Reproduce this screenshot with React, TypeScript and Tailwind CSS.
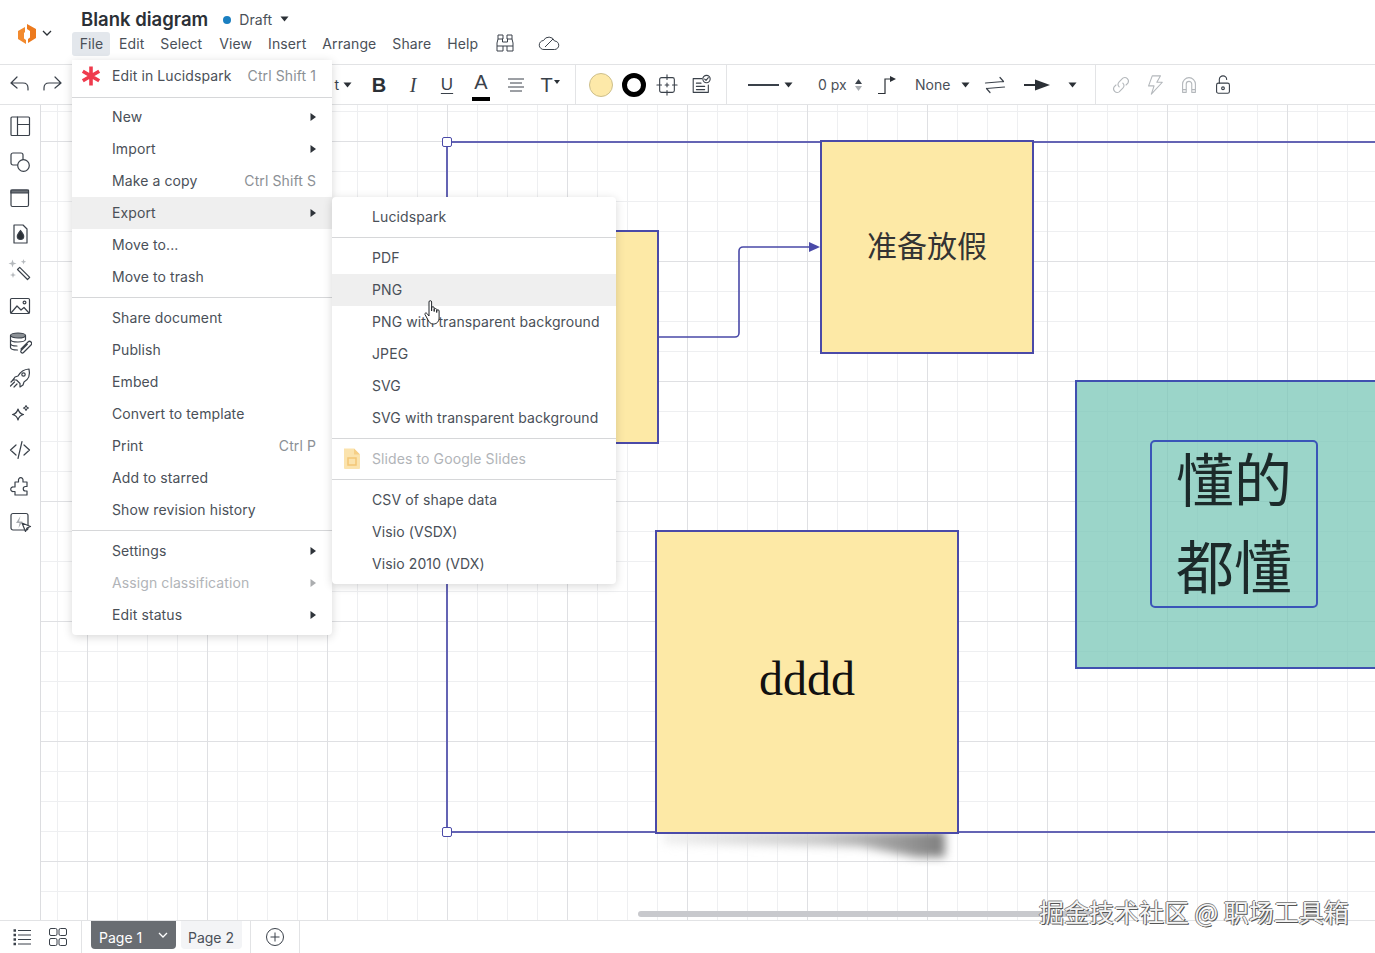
import React from 'react';

const ui = "font-['Inter','Noto_Sans',sans-serif]";

type IconProps = { className?: string; children: React.ReactNode; size?: number };

const Ico: React.FC<IconProps> = ({ className = 'text-[#3a414a]', children, size = 24 }) => (
    <svg
        width={size}
        height={size}
        viewBox="0 0 24 24"
        fill="none"
        stroke="currentColor"
        strokeWidth="1.2"
        strokeLinecap="round"
        strokeLinejoin="round"
        className={className}
    >
        {children}
    </svg>
);

const Caret: React.FC<{ className?: string }> = ({ className = '' }) => (
    <svg width="9" height="6" viewBox="0 0 9 6" className={className}>
        <path d="M0.5 0.5h8L4.5 5.5z" fill="#2b3036" />
    </svg>
);

const SubArrow = () => (
    <svg width="6" height="8" viewBox="0 0 6 8">
        <path d="M0.5 0v8L6 4z" fill="#2f343a" />
    </svg>
);

const railIcons: React.ReactNode[] = [
    <><rect x="3" y="3" width="18.5" height="18.5" rx="1" /><path d="M9.500 3v18.500M9.500 10.500h12" /></>,
    <><rect x="3" y="3" width="12" height="12" rx="2" /><circle cx="15.5" cy="15.5" r="5.8" fill="#fff" /></>,
    <><rect x="3" y="4" width="17.5" height="16.5" rx="1.5" /><path d="M3 4h17.5v3H3z" fill="#6c7278" /></>,
    <><path d="M6 3h9l4 4v14H6z" /><path d="M12.5 8.5c2 2.6 3.2 4 3.2 5.8a3.2 3.2 0 0 1-6.4 0c0-1.8 1.2-3.2 3.2-5.8z" fill="#2b3036" /></>,
    <><path d="M9.500 11.500l2.200-2.200 10 10-2.200 2.200z" /><path d="M4.500 1.500l1 3 3 1-3 1-1 3-1-3-3-1 3-1zM15.500 1l.7 2 2 .7-2 .7-.7 2-.7-2-2-.7 2-.7zM5 14l.8 2.200 2.200.8-2.200.8L5 20l-.8-2.200L2 17l2.200-.8z" fill="#b5b9bd" stroke="none" /></>,
    <><rect x="2.5" y="4.5" width="19" height="15" rx="1.2" /><path d="M3 19l6-7 4 4 3-2.5 5 5.5" /><circle cx="16.5" cy="8.5" r="1.4" /></>,
    <><ellipse cx="10" cy="5.5" rx="7.5" ry="2.5" fill="#8b9095" /><path d="M2.5 5.5v12c0 1.4 3 2.5 7 2.5M2.5 9.5c0 1.4 3.4 2.5 7.5 2.5s7.5-1.1 7.5-2.5v-4M2.5 13.5c0 1.4 3 2.5 6.5 2.5" /><path d="M13 19l7-7a2 2 0 0 1 3 3l-7.5 7.5a1.5 1.5 0 0 1-2.2-2.2l6-6" /></>,
    <><path d="M21 3c-5 .3-8.500 2.500-11 7l-3 1-2 3h3.500l3.500 3.500V21l3-2 1-3c4.500-2.500 6.500-6.500 5-13z" /><circle cx="15.500" cy="8.500" r="1.700" /><path d="M3 16l3-3M2.500 20l4-4M6 21l3-3" /></>,
    <><path d="M10 7c.8 3.500 2 4.700 5.500 5.500-3.500.8-4.700 2-5.500 5.500-.8-3.500-2-4.700-5.500-5.500C8 11.700 9.200 10.500 10 7z" /><path d="M18 3.500c.3 1.500 1 2.200 2.500 2.500-1.500.3-2.200 1-2.500 2.500-.3-1.500-1-2.200-2.500-2.500 1.500-.3 2.200-1 2.500-2.500z" /></>,
    <><path d="M8 7l-5.500 5L8 17M16 7l5.500 5-5.500 5M14 3.500L10 20.500" /></>,
    <><path d="M7 8h3.500V6.500a2.300 2.300 0 1 1 4.500 0V8H19v4.500h-1.500a2.200 2.200 0 0 0 0 4.500H19v4H7v-3.500H5.500a2.300 2.300 0 1 1 0-4.500H7z" /></>,
    <><rect x="3" y="3.500" width="17" height="16.500" rx="2" /><path d="M12.500 6L8 13h3.500l-1 5 4-6.500H11z" fill="#a9adb2" stroke="none" /><path d="M14 13l8.500 3.500-3.500 1.500-1.500 3.500z" fill="#fff" /></>,
];

const RailIcon: React.FC<{ children: React.ReactNode }> = ({ children }) => (
    <div className="h-[36px] w-[40px] flex items-center justify-center">
        <Ico>{children}</Ico>
    </div>
);

const Cell: React.FC<{ children: React.ReactNode; className?: string }> = ({ children, className = '' }) => (
    <div className={`w-[34px] h-full flex items-center justify-center shrink-0 relative ${className}`}>{children}</div>
);

const Sep = () => <div className="w-px h-[39px] bg-[#e3e4e6] shrink-0" />;

const Toolbar = () => (
    <div className="h-[40px] border-b border-[#e2e3e5] flex items-center bg-white shrink-0 text-[#3a414a]">
        <div className="w-[37px] flex justify-center">
            <Ico><path d="M4 10h12c3 0 5 2 5 5v2M4 10l6-6M4 10l6 5" /></Ico>
        </div>
        <div className="w-[30px] flex justify-center">
            <Ico><path d="M21 10H9c-3 0-5 2-5 5v2M21 10l-6-6M21 10l-6 5" /></Ico>
        </div>
        <div className="ml-[255px] w-[30px] flex items-center justify-end gap-[4px] text-sm">
            <span>t</span>
            <Caret />
        </div>
        <div className="flex h-full ml-[10px] items-center">
            <Cell><span className="font-['Liberation_Sans',sans-serif] font-bold text-[20px] text-[#2b3036]">B</span></Cell>
            <Cell><span className="font-['Liberation_Serif',serif] italic text-[20px] text-[#3a414a]">I</span></Cell>
            <Cell><span className="font-['Liberation_Sans',sans-serif] text-[17px] underline underline-offset-[3px] text-[#3a414a]">U</span></Cell>
            <Cell>
                <span className="font-['Liberation_Sans',sans-serif] text-[20px] leading-none -mt-[5px] text-[#3a414a]">A</span>
                <div className="absolute bottom-[3px] left-[8px] w-[18px] h-[4px] bg-black" />
            </Cell>
            <Cell className="ml-px">
                <svg width="18" height="16" viewBox="0 0 18 16" stroke="#3a414a"><path d="M1 2h16M3 6h12M1 10h16M3 14h12" /></svg>
            </Cell>
            <Cell>
                <span className="font-['Liberation_Sans',sans-serif] text-[20px]">T</span>
                <svg width="6" height="4" viewBox="0 0 6 4" className="mb-[5px] ml-[1px]"><path d="M0 0h6L3 4z" fill="#2b3036" /></svg>
            </Cell>
        </div>
        <div className="ml-[8px]"><Sep /></div>
        <div className="flex h-full items-center ml-[8px]">
            <Cell><div className="w-[24px] h-[24px] rounded-full bg-[#fde9a9] border border-[#cdbf8c]" /></Cell>
            <Cell className="-ml-px"><div className="w-[24px] h-[24px] rounded-full border-[5px] border-black bg-white" /></Cell>
            <Cell className="-ml-px">
                <Ico size={22}><rect x="4" y="4" width="16" height="16" rx="2" /><path d="M12 1v5M12 10v4M12 18v5M1 12h5M10 12h4M18 12h5" /></Ico>
            </Cell>
            <Cell>
                <Ico size={22}><path d="M13 5H3.500v15H20v-8M7 10h5M7 13.500h9M7 17h9" /><circle cx="18" cy="5.500" r="4" /><path d="M16 5.500l1.500 1.500 2.500-3" /></Ico>
            </Cell>
        </div>
        <div className="ml-[8px]"><Sep /></div>
        <div className="ml-[21px] w-[31px] h-[2px] bg-[#3a414a]" />
        <Caret className="ml-[5px]" />
        <span className={`ml-[25px] text-[14px] text-[#4a5058] w-[30px] whitespace-nowrap ${ui}`}>0 px</span>
        <div className="ml-[7px] flex flex-col gap-[2px]">
            <svg width="7" height="5" viewBox="0 0 7 5"><path d="M0 5h7L3.500 0z" fill="#3a414a" /></svg>
            <svg width="7" height="5" viewBox="0 0 7 5"><path d="M0 0h7L3.500 5z" fill="#a9adb2" /></svg>
        </div>
        <div className="ml-[13px] w-[24px] flex justify-center">
            <svg width="20" height="20" viewBox="0 0 20 20" fill="none" stroke="#2b3036" strokeWidth="1.200"><path d="M1 18.500h7V4h6" /><path d="M13 1l6 3-6 3z" fill="#2b3036" stroke="none" /></svg>
        </div>
        <span className={`ml-[16px] text-[14px] text-[#4a5058] ${ui}`}>None</span>
        <Caret className="ml-[11px]" />
        <div className="ml-[5px] w-[40px] flex justify-center">
            <svg width="22" height="18" viewBox="0 0 22 18" fill="none" stroke="#3a414a" strokeWidth="1.200" strokeLinecap="round" strokeLinejoin="round">
                <path d="M1.500 7l18-1.500M16 1.500l3.500 4M20.500 11l-18 1.500M6 16.500l-3.500-4" />
            </svg>
        </div>
        <svg width="26" height="12" viewBox="0 0 26 12" className="ml-[9px]"><path d="M0 5h14V6H0zM0 5.500h13v1.500H0z" fill="#2b3036" /><path d="M11 0.500L26 6l-15 5.500z" fill="#2b3036" /></svg>
        <Caret className="ml-[18px]" />
        <div className="ml-[18px]"><Sep /></div>
        <div className="flex h-full items-center ml-[8px]">
            <Cell><Ico size={22} className="text-[#b4b8bc]"><path d="M10 14a4 4 0 0 1 0-5.500l4-4a4 4 0 0 1 5.500 5.500l-2 2M14 10a4 4 0 0 1 0 5.500l-4 4a4 4 0 0 1-5.500-5.500l2-2" /></Ico></Cell>
            <Cell><Ico size={22} className="text-[#b4b8bc]"><path d="M9 2h9l-4 7h6L8 22l3-9H5z" /></Ico></Cell>
            <Cell><Ico size={22} className="text-[#b4b8bc]"><path d="M5 20V11a7 7 0 0 1 14 0v9h-4v-9a3 3 0 0 0-6 0v9zM5 17h4M15 17h4" /></Ico></Cell>
            <Cell><Ico size={22}><rect x="5" y="10" width="14" height="11" rx="2" /><path d="M8 10V6a4 4 0 0 1 8 0" /><circle cx="12" cy="15.500" r="1.500" /></Ico></Cell>
        </div>
    </div>
);

const Header = () => (
    <div className={`h-[64px] bg-white flex shrink-0 ${ui}`}>
        <div className="w-[72px] flex items-center pl-[17px] pt-[2px] gap-[5px]">
            <svg width="20" height="21" viewBox="0 0 20 21">
                <path d="M1 8L8 4v5l-1 1v5.500l2 1.500v4L1 16z" fill="#f28a2e" />
                <path d="M10 1l9 5v9l-8 5v-4l2-1.500V8l-3-2z" fill="#ec7a1e" />
            </svg>
            <svg width="10" height="6" viewBox="0 0 10 6" fill="none" stroke="#2b3036" strokeWidth="1.300"><path d="M1 1l4 4 4-4" /></svg>
        </div>
        <div className="flex flex-col">
            <div className="flex items-center h-[32px] pt-[8px] pl-[9px]">
                <span className="text-[18.500px] font-semibold text-[#2b3036]">Blank diagram</span>
                <span className="w-[8px] h-[8px] rounded-full bg-[#1a7fc1] ml-[15px]" />
                <span className="ml-[8px] -mt-[2px] text-[14px] tracking-[0.1px] text-[#4a5058]">Draft</span>
                <Caret className="ml-[8px] -mt-[2px]" />
            </div>
            <div className="flex items-center h-[24px] pb-[2px] text-[14px] tracking-[0.1px] text-[#4a5058]">
                <span className="w-[38px] h-[24px] mt-[2px] rounded-[3px] bg-[#e3e7ec] flex items-center justify-center pl-[1px] pb-[2px]">File</span>
                <span className="ml-[9px]">Edit</span>
                <span className="ml-[16px]">Select</span>
                <span className="ml-[17px]">View</span>
                <span className="ml-[16px]">Insert</span>
                <span className="ml-[16px]">Arrange</span>
                <span className="ml-[16px]">Share</span>
                <span className="ml-[16px]">Help</span>
                <svg width="20" height="20" viewBox="0 0 20 20" fill="none" stroke="#3a414a" className="ml-[17px]">
                    <path d="M3 2h5v4h-.5v3H12.500V6H12V2h5v4l1 4v8h-6v-5H8v5H2v-8l1-4zM3 6h5M12 6h5M2 13h6M12 13h6" />
                </svg>
                <svg width="22" height="16" viewBox="0 0 22 16" fill="none" stroke="#3a414a" className="ml-[23px]">
                    <path d="M6 14.500a4.500 4.500 0 0 1-.5-9A6 6 0 0 1 16.500 6a4.200 4.200 0 0 1 0 8.500zM7 12L15 4" />
                </svg>
            </div>
        </div>
    </div>
);

type Row = {
    label?: string;
    hint?: string;
    sub?: boolean;
    muted?: boolean;
    active?: boolean;
    icon?: React.ReactNode;
    hr?: number[];
};

const fileRows: Row[] = [
    {
        label: 'Edit in Lucidspark',
        hint: 'Ctrl Shift 1',
        icon: (
            <svg width="22" height="22" viewBox="0 0 22 22" stroke="#ef3b4d" strokeWidth="3.600" className="mt-[1px] -ml-[1px]">
                <path d="M11 1.500v19M2.800 6.200l16.400 9.600M19.200 6.200L2.800 15.800" />
            </svg>
        ),
    },
    { hr: [5, 3] },
    { label: 'New', sub: true },
    { label: 'Import', sub: true },
    { label: 'Make a copy', hint: 'Ctrl Shift S' },
    { label: 'Export', sub: true, active: true },
    { label: 'Move to...' },
    { label: 'Move to trash' },
    { hr: [4, 4] },
    { label: 'Share document' },
    { label: 'Publish' },
    { label: 'Embed' },
    { label: 'Convert to template' },
    { label: 'Print', hint: 'Ctrl P' },
    { label: 'Add to starred' },
    { label: 'Show revision history' },
    { hr: [4, 4] },
    { label: 'Settings', sub: true },
    { label: 'Assign classification', sub: true, muted: true },
    { label: 'Edit status', sub: true },
];

const exportRows: Row[] = [
    { label: 'Lucidspark' },
    { hr: [4, 4] },
    { label: 'PDF' },
    { label: 'PNG', active: true },
    { label: 'PNG with transparent background' },
    { label: 'JPEG' },
    { label: 'SVG' },
    { label: 'SVG with transparent background' },
    { hr: [4, 4] },
    {
        label: 'Slides to Google Slides',
        muted: true,
        icon: (
            <svg width="18" height="24" viewBox="0 0 18 24" className="-mt-[1px]">
                <path d="M1 2.500h10l6 6V22a1 1 0 0 1-1 1H2a1 1 0 0 1-1-1z" fill="#fbe3ad" />
                <path d="M11 2.500l6 6h-6z" fill="#f6cf86" />
                <rect x="5" y="12" width="8" height="7" fill="none" stroke="#f3c676" strokeWidth="1.500" />
            </svg>
        ),
    },
    { hr: [4, 4] },
    { label: 'CSV of shape data' },
    { label: 'Visio (VSDX)' },
    { label: 'Visio 2010 (VDX)' },
];

const MenuRows: React.FC<{ rows: Row[]; iconLeft: string; pl: string; pr: string }> = ({ rows, iconLeft, pl, pr }) => (
    <>
        {rows.map((r, i) =>
            r.hr ? (
                <div key={i} className="h-px bg-[#d6d7d9]" style={{ marginTop: r.hr[0], marginBottom: r.hr[1] }} />
            ) : (
                <div
                    key={i}
                    className={`relative h-[32px] pb-[2px] flex items-center justify-between ${pl} ${pr} ${r.active ? 'bg-[#efefef]' : ''}`}
                >
                    {r.icon && <div className={`absolute top-[4px] ${iconLeft}`}>{r.icon}</div>}
                    <span className={`whitespace-nowrap ${r.muted ? 'text-[#b1b4b8]' : 'text-[#4a5058]'}`}>{r.label}</span>
                    {r.hint && <span className="text-[#8b9095] whitespace-nowrap">{r.hint}</span>}
                    {r.sub && (
                        <span className={`mt-[2px] ${r.muted ? 'opacity-40' : ''}`}>
                            <SubArrow />
                        </span>
                    )}
                </div>
            ),
        )}
    </>
);

const Canvas = () => (
    <div
        className="relative flex-1 overflow-hidden bg-white bg-[linear-gradient(to_right,#dfe0e3_1px,transparent_1px),linear-gradient(to_bottom,#dfe0e3_1px,transparent_1px),linear-gradient(to_right,#eeeff1_1px,transparent_1px),linear-gradient(to_bottom,#eeeff1_1px,transparent_1px)] bg-[size:120px_120px,120px_120px,30px_30px,30px_30px] bg-[position:46px_36px,46px_36px,16px_6px,16px_6px]"
    >
        {/* shapes, left/top are canvas coordinates */}
        <div className="absolute left-[405px] top-[36px] w-[1000px] h-[692px] border-2 border-[#6464b4] border-r-0" />
        <div className="absolute left-[401px] top-[32px] w-[10px] h-[10px] bg-white border border-[#4a4aa8] rounded-[2px]" />
        <div className="absolute left-[401px] top-[722px] w-[10px] h-[10px] bg-white border border-[#4a4aa8] rounded-[2px]" />

        <div className="absolute left-[520px] top-[125px] w-[98px] h-[214px] bg-[#fde9a6] border-2 border-[#4a4aa8]" />

        <svg className="absolute left-[615px] top-[130px]" width="166" height="110" viewBox="0 0 166 110" fill="none">
            <path d="M1 102h78a4 4 0 0 0 4-4V16a4 4 0 0 1 4-4h68" stroke="#4a4aa8" strokeWidth="1.600" />
            <path d="M153 7l11 5-11 5z" fill="#4a4aa8" />
        </svg>

        <div className="absolute left-[779px] top-[35px] w-[214px] h-[214px] bg-[#fde9a6] border-2 border-[#4a4aa8] flex items-center justify-center pb-[6px]">
            <span className="font-['Noto_Sans_CJK_TC',sans-serif] text-[30px] text-[#333]">准备放假</span>
        </div>

        <div className="absolute left-[622px] top-[726px] w-[282px] h-[26px] blur-[5px]">
            <div className="w-full h-full bg-[linear-gradient(to_right,#f0f0f0,#c9c9c9_55%,#7f7f7f)] [clip-path:polygon(0_0,100%_0,100%_100%,90%_100%,70%_60%,0_50%)]" />
        </div>
        <div className="absolute left-[614px] top-[425px] w-[304px] h-[304px] bg-[#fde9a6] border-2 border-[#4a4aa8] flex items-center justify-center pb-[6px]">
            <span className="font-['Liberation_Serif',serif] text-[48px] text-[#111]">dddd</span>
        </div>

        <div className="absolute left-[1034px] top-[275px] w-[400px] h-[289px] bg-[#79c7b7]/75 border-2 border-[#4050b0]">
            <div className="absolute left-[73px] top-[58px] w-[168px] h-[168px] rounded-[5px] border-2 border-[#3a55b8] flex items-center justify-center pb-[6px]">
                <span className="font-['Noto_Sans_CJK_TC',sans-serif] text-[58px] leading-[87px] w-[120px] text-center text-[#1c2a2a]">懂的都懂</span>
            </div>
        </div>

        <div className="absolute left-[597px] bottom-[3px] w-[470px] h-[6px] rounded-full bg-[#c8c9cd]" />
    </div>
);

const Footer = () => (
    <div className={`h-[33px] border-t border-[#e2e3e5] bg-white flex items-stretch shrink-0 ${ui}`}>
        <div className="w-[82px] border-r border-[#e2e3e5] flex items-center gap-[18px] pl-[13px]">
            <svg width="18" height="18" viewBox="0 0 18 18" stroke="#3a414a">
                <path d="M5 2.500h13M5 7h13M5 11.500h13M5 16h13" />
                <path d="M0.500 2.500h2.500M0.500 7h2.500M0.500 11.500h2.500M0.500 16h2.500" strokeWidth="2.500" />
            </svg>
            <svg width="18" height="18" viewBox="0 0 18 18" fill="none" stroke="#3a414a">
                <rect x="0.500" y="0.500" width="7.500" height="7" rx="1.500" />
                <rect x="10" y="0.500" width="7.500" height="7" rx="1.500" />
                <rect x="0.500" y="10.500" width="7.500" height="7" rx="1.500" />
                <rect x="10" y="10.500" width="7.500" height="7" rx="1.500" />
            </svg>
        </div>
        <div className="ml-[9px] w-[85px] h-[28px] bg-[#696d72] rounded-b-[4px] flex items-center justify-between pl-[8px] pr-[8px] text-white text-[14px]">
            <span className="mt-[4px]">Page 1</span>
            <svg width="10" height="6" viewBox="0 0 10 6" fill="none" stroke="#fff" strokeWidth="1.300"><path d="M1 1l4 4 4-4" /></svg>
        </div>
        <div className="ml-[5px] w-[61px] h-[28px] bg-[#f3f4f6] rounded-b-[4px] flex items-center justify-center pr-[1px] text-[#4a5058] text-[14px]">
            <span className="mt-[4px]">Page 2</span>
        </div>
        <div className="ml-[8px] w-[50px] border-x border-[#e2e3e5] flex items-center justify-center">
            <svg width="18" height="18" viewBox="0 0 18 18" fill="none" stroke="#3a414a"><circle cx="9" cy="9" r="8.500" /><path d="M9 4.500v9M4.500 9h9" /></svg>
        </div>
    </div>
);

const App: React.FC = () => {
    return (
        <div className={`relative w-[1375px] h-[953px] overflow-hidden bg-white flex flex-col ${ui}`}>
            <Header />
            <div className="border-t border-[#e2e3e5]" />
            <Toolbar />
            <div className="flex flex-1 min-h-0">
                <div className="w-[41px] shrink-0 border-r border-[#dcdde0] bg-white pt-[3px] flex flex-col">
                    {railIcons.map((icon, i) => (
                        <RailIcon key={i}>{icon}</RailIcon>
                    ))}
                </div>
                <Canvas />
            </div>
            <Footer />

            {/* File menu */}
            <div className="absolute left-[72px] top-[60px] w-[260px] bg-white pb-[4px] rounded-b-[4px] shadow-[0_2px_10px_rgba(0,0,0,0.16)] text-[14px] tracking-[0.1px]">
                <MenuRows rows={fileRows} iconLeft="left-[9px]" pl="pl-[40px]" pr="pr-[16px]" />
            </div>

            {/* Export submenu */}
            <div className="absolute left-[332px] top-[197px] w-[284px] bg-white pt-[4px] pb-[4px] rounded-[4px] shadow-[0_2px_10px_rgba(0,0,0,0.16)] text-[14px] tracking-[0.1px]">
                <MenuRows rows={exportRows} iconLeft="left-[11px]" pl="pl-[40px]" pr="pr-[16px]" />
            </div>

            {/* hand cursor */}
            <svg className="absolute left-[424px] top-[300px]" width="18" height="26" viewBox="0 0 18 26">
                <path
                    d="M5 2a1.300 1.300 0 0 1 2.600 0v9V8a1.300 1.300 0 0 1 2.600 0v3.500-2a1.300 1.300 0 0 1 2.500 0v3-1.500a1.200 1.200 0 0 1 2.400 0V18c0 3-2 6-5.500 6S5 22 3.500 19L1 14.500c-.6-1.200 1-2.200 2-1L5 16z"
                    fill="#fff"
                    stroke="#22262a"
                    strokeWidth="1"
                />
            </svg>

            {/* watermark */}
            <div className="absolute left-[1039px] top-[895px] font-['Noto_Sans_CJK_SC',sans-serif] text-[25px] leading-[32px] text-[#f5f5f5] whitespace-nowrap [text-shadow:1px_1px_0_#555,-1px_0_0_#777,0_-1px_0_#888]">
                掘金技术社区 @ 职场工具箱
            </div>
        </div>
    );
};

export default App;
